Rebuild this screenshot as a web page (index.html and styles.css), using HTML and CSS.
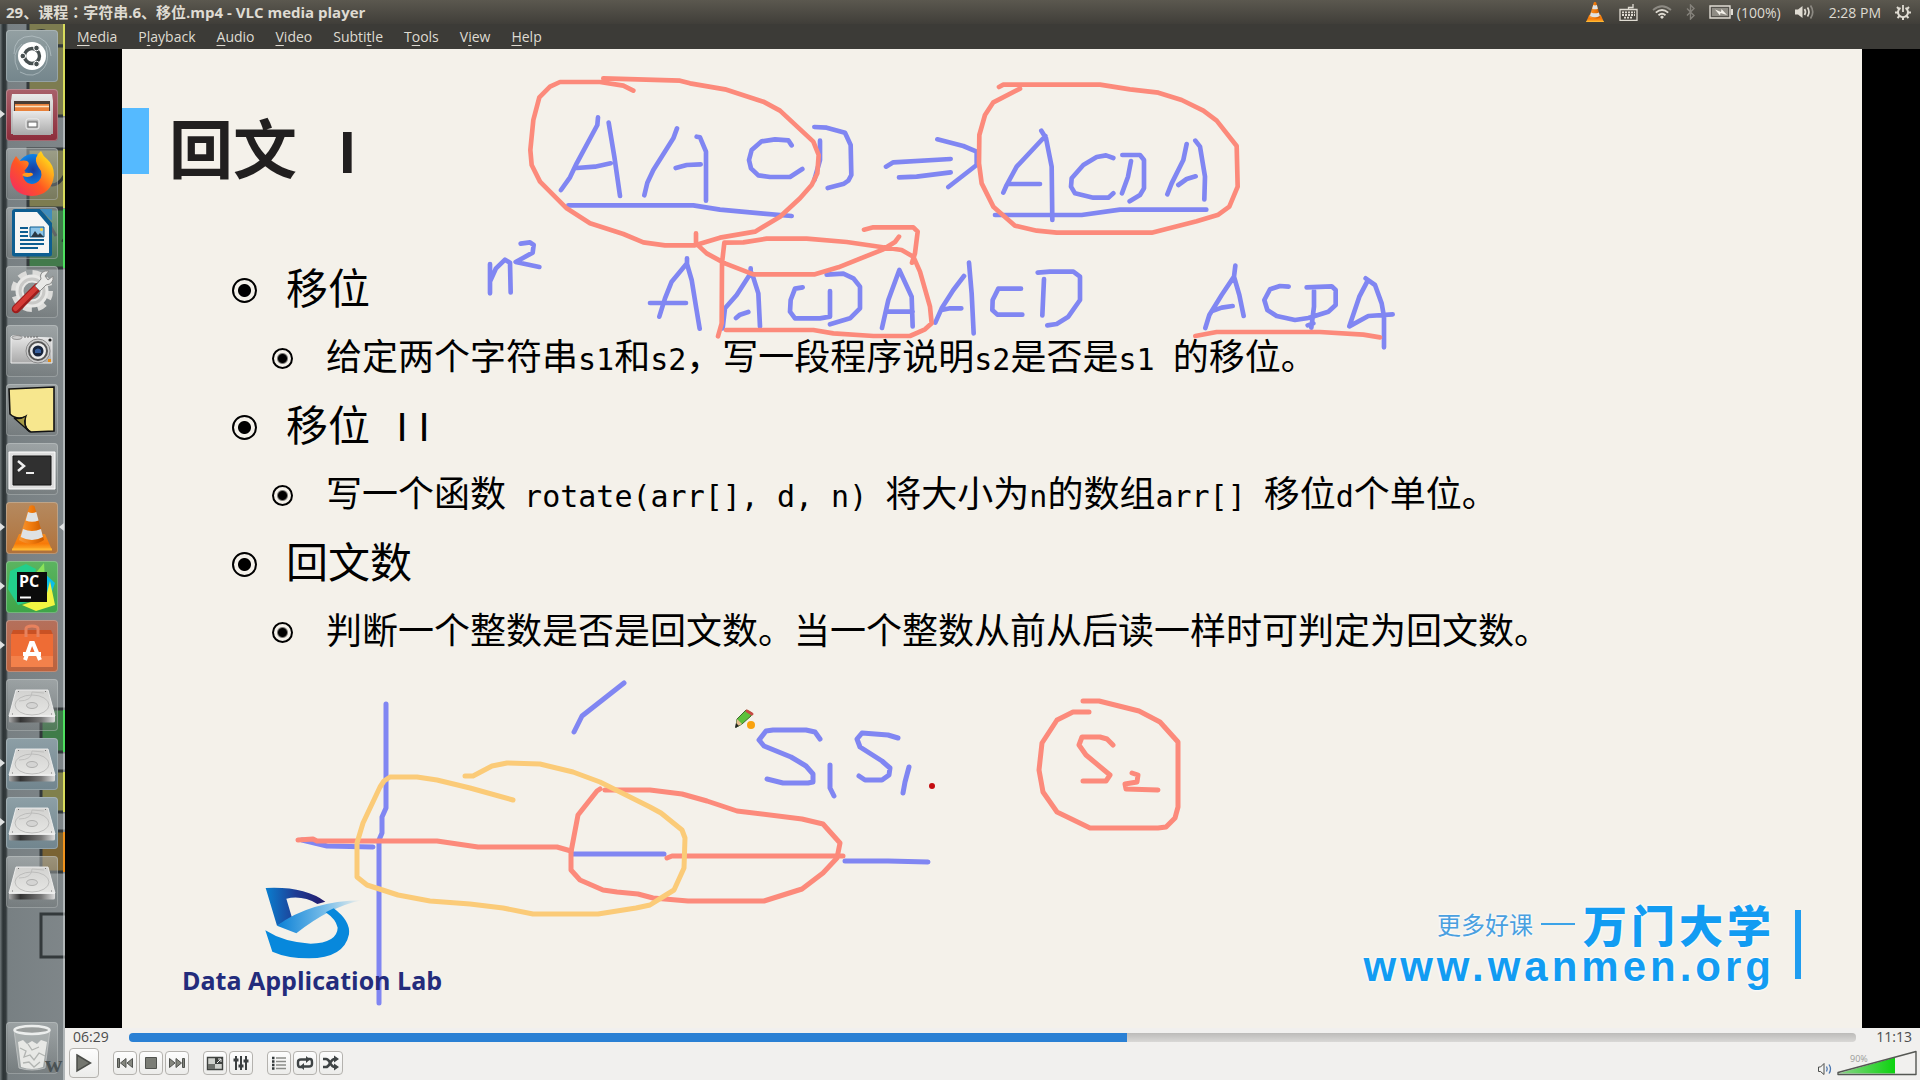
FILE: index.html
```html
<!DOCTYPE html>
<html lang="zh-CN">
<head>
<meta charset="utf-8">
<title>29、课程：字符串.6、移位.mp4 - VLC media player</title>
<link rel="stylesheet" href="styles.css">
</head>
<body>
<svg class="defs" width="0" height="0" aria-hidden="true">
  <defs>
    <linearGradient id="coneGrad" x1="0" x2="1"><stop offset="0" stop-color="#f79a3a"/><stop offset=".5" stop-color="#f07a0c"/><stop offset="1" stop-color="#c95a00"/></linearGradient>
    <linearGradient id="baseGrad" x1="0" x2="0" y1="0" y2="1"><stop offset="0" stop-color="#f28a1e"/><stop offset=".6" stop-color="#f87a08"/><stop offset="1" stop-color="#fdb12b"/></linearGradient>
    <linearGradient id="metal" x1="0" x2="0" y1="0" y2="1"><stop offset="0" stop-color="#e9e9e9"/><stop offset="1" stop-color="#a9a9a9"/></linearGradient>
    <linearGradient id="diskTop" x1="0" x2="0" y1="0" y2="1"><stop offset="0" stop-color="#d2d2d0"/><stop offset="1" stop-color="#e6e6e4"/></linearGradient>
    <linearGradient id="diskFront" x1="0" x2="1"><stop offset="0" stop-color="#aaa"/><stop offset=".25" stop-color="#333"/><stop offset=".7" stop-color="#777"/><stop offset="1" stop-color="#ddd"/></linearGradient>
    <symbol id="cone" viewBox="0 0 52 52">
      <path d="M13 32H39L46 48H6Z" fill="url(#baseGrad)"/>
      <path d="M6 46.500H46V48.500H6Z" fill="#ffb733"/>
      <path d="M23.500 4Q26 2.600 28.500 4L38 38Q26 46 13 38Z" fill="url(#coneGrad)"/>
      <path d="M22 10Q26 12 30.300 10L32.600 18.500Q26 21 19.600 18.500Z" fill="#dfe2e4"/>
      <path d="M17 27Q26 31 35 27L37 35Q26 41 14.700 35Z" fill="#dfe2e4"/>
    </symbol>
    <symbol id="disk" viewBox="0 0 52 52">
      <path d="M10 11H42L49 37H3Z" fill="url(#diskTop)" stroke="#f6f6f6" stroke-width=".8"/>
      <path d="M3 37H49V42Q49 43.500 47 43.500H5Q3 43.500 3 42Z" fill="url(#diskFront)"/>
      <path d="M3 37.400H49" stroke="#f3f3f3"/>
      <ellipse cx="26" cy="26" rx="17" ry="10" fill="none" stroke="#b9b9b8" stroke-width=".9"/>
      <ellipse cx="26" cy="26.500" rx="5.500" ry="3" fill="#d4d4d3" stroke="#a9a9a8" stroke-width=".9"/>
      <path d="M13 22Q26 22 26 13L38 14" fill="none" stroke="#bcbcbb" stroke-width=".9"/>
      <path d="M12 12.500L13 12.500M39 12.500H40M6 35H7M45 35H46" stroke="#777"/>
    </symbol>
  </defs>
</svg>

<header class="panel">
  <h1 class="panel-title">29、课程<span lang="zh-TW" class="colon">：</span>字符串.6、移位.mp4 - VLC media player</h1>
  <div class="tray">
    <svg width="20" height="22" viewBox="4 1 44 50"><use href="#cone" width="52" height="52"/></svg>
    <svg width="19" height="18" viewBox="0 0 19 18" fill="none" stroke="#dfdbd2" stroke-width="1.300"><path d="M1 6.500H18V17.300H1ZM9.500 6V4.500H14V1"/><path d="M3 9.300H16M3 12H16M5 14.700H14" stroke-width="1.800" stroke-dasharray="2 1"/></svg>
    <svg width="20" height="14" viewBox="0 0 20 14" fill="none" stroke="#dfdbd2" stroke-width="1.800"><path d="M1 5Q10-2.500 19 5" stroke="#8d8a83"/><path d="M3.800 7.600Q10 2.400 16.200 7.600M6.500 10.200Q10 7.300 13.500 10.200"/><path d="M8 12L10 10.600L12 12L10 14Z" fill="#dfdbd2" stroke="none"/></svg>
    <svg width="9" height="16" viewBox="0 0 9 16" fill="none" stroke="#85827b" stroke-width="1.400"><path d="M1 4.500L8 11.500L4.500 15V1L8 4.500L1 11.500"/></svg>
    <span class="battery">
      <svg width="24" height="14" viewBox="0 0 24 14"><path d="M1 1H21V13H1Z" fill="#55534d" stroke="#dfdbd2" stroke-width="1.400"/><path d="M22 4H24V10H22Z" fill="#dfdbd2"/><path d="M3 3H19V11H3Z" fill="#8f8c84"/><path d="M6 4.500L12 7L12.500 4L18 10L11.500 8L11 10.500Z" fill="#f4f1ea"/></svg>
      <span>(100%)</span>
    </span>
    <svg width="20" height="16" viewBox="0 0 20 16" fill="none" stroke="#dfdbd2" stroke-width="1.700"><path d="M0 5.500H3L7.500 2V14L3 10.500H0Z" fill="#dfdbd2" stroke="none"/><path d="M9.500 5Q11.500 8 9.500 11M12.500 3.500Q15.500 8 12.500 12.500"/><path d="M15.500 1.500Q20 8 15.500 14.500" stroke="#8d8a83"/></svg>
    <time>2:28 PM</time>
    <svg width="16" height="16" viewBox="0 0 16 16" fill="none" stroke="#dfdbd2"><path d="M5.500 3.900A5 5 0 1 0 10.500 3.900" stroke-width="2"/><path d="M8 1V8" stroke-width="1.800"/><path d="M2 3L4 5M14 3L12 5M0 8.500H3M16 8.500H13M2.500 14L4.500 12M13.500 14L11.500 12M8 16V13" stroke-width="2"/></svg>
  </div>
</header>

<div class="desktop">
  <nav class="launcher" aria-label="Launcher">
    <svg class="wallpaper" width="65" height="1056" viewBox="0 24 65 1056" aria-hidden="true">
      <g stroke="#33393b" stroke-width="3">
        <path d="M28 0H70V46H28Z" fill="#7d7c50"/><path d="M28 46H70V116H28Z" fill="#7d7c50"/>
        <path d="M28 149H70V208H28Z" fill="#7d7c50"/><path d="M28 209H70V268H28Z" fill="#427a4b"/>
        <path d="M41 709H70V752H41Z" fill="#3f7c49"/><path d="M41 771H70V812H41Z" fill="#80804c"/>
        <path d="M41 831H70V872H41Z" fill="#7a6333"/><path d="M41 914H70V957H41Z" fill="none"/>
        <path d="M34 32Q52 26 48 44L36 46M44 182Q56 190 64 176M40 208L56 236M62 240L66 242" fill="none"/>
      </g>
      <path d="M64 24V1080" stroke="#e3e6e6" stroke-width="1"/>
      <path d="M64 24V116M64 149V208M64 772V812" stroke="#d8dc5c" stroke-width="2"/>
      <path d="M64 209V268M64 710V752" stroke="#4ee05f" stroke-width="2"/><path d="M64 832V872" stroke="#f0921c" stroke-width="2"/>
    </svg>
    <button class="tile tile-dash" aria-label="Search">
      <svg viewBox="0 0 52 52"><g fill="none" stroke="#c2cdd0" stroke-opacity=".6"><path d="M8 24Q8 6 26 6Q44 8 45 26"/><path d="M12 40Q4 24 16 14M14 42Q28 50 38 38Q44 30 40 16"/></g><circle cx="26" cy="26" r="14" fill="#fff"/><circle cx="26" cy="26" r="7.500" fill="none" stroke="#474f50" stroke-width="3.400"/><g fill="#474f50" stroke="#fff"><circle cx="16.800" cy="26" r="2.800"/><circle cx="30.500" cy="18" r="2.800"/><circle cx="30.500" cy="34" r="2.800"/></g></svg>
    </button>
    <button class="tile tile-files running" aria-label="Files">
      <svg viewBox="0 0 52 52"><path d="M6 5H46L47 12V45H5V12Z" fill="url(#metal)"/><path d="M8 12H44V24H8Z" fill="#4a3d34"/><path d="M9 15H43V22H9Z" fill="#e8813a"/><path d="M9 17.500H43" stroke="#fbe2c0" stroke-width="1.500"/><path d="M7 22H45V46H7Z" fill="url(#metal)"/><rect x="20" y="30" width="13" height="10" rx="2" fill="#bbb" stroke="#eee"/><rect x="22" y="33" width="9" height="5" fill="#fff" stroke="#666"/></svg>
    </button>
    <button class="tile" aria-label="Firefox">
      <svg viewBox="0 0 52 52"><defs><linearGradient id="fox" x1="0" y1="1" x2="1" y2="0"><stop offset="0" stop-color="#f2246c"/><stop offset=".45" stop-color="#ff5722"/><stop offset=".8" stop-color="#ffc61a"/><stop offset="1" stop-color="#fff04d"/></linearGradient><radialGradient id="globe"><stop offset="0" stop-color="#1b3a9c"/><stop offset="1" stop-color="#0d84e8"/></radialGradient></defs><circle cx="27" cy="22" r="16" fill="url(#globe)"/><path d="M7 13L10 8L14 13Q18 12 21 13Q25 15 20 21Q17 23 20 24Q16 27 18 31Q22 38 30 35Q37 31 35 23Q29 15 30 10Q32 5 35 3Q37 8 41 11Q48 17 48 27Q46 47 26 48Q6 47 4 29Q4 18 7 13Z" fill="url(#fox)"/><path d="M16 27Q21 31 27 27Q27 24 23 25Q18 24 16 27Z" fill="#ff9a1f"/></svg>
    </button>
    <button class="tile" aria-label="LibreOffice Writer">
      <svg viewBox="0 0 52 52"><path d="M9 2H34L46 16V47Q46 49.500 43 49.500H9Q6 49.500 6 47V5Q6 2 9 2Z" fill="#0d5e91"/><path d="M34 2H46V14Z" fill="#3f8cbc"/><path d="M9 5H31L43 19V46H9Z" fill="#f6f6f4"/><path d="M14 21H22M14 25H22M14 29H22M14 33H38M14 37H38M14 41H32" stroke="#0d5e91" stroke-width="2"/><path d="M24 20H38V30H24Z" fill="#8dc5e8" stroke="#0d5e91"/><path d="M25 30L29 24L32 28L34 26L38 30Z" fill="#2b3a45"/><circle cx="35.500" cy="22.500" r="1.500" fill="#ffd23e"/></svg>
    </button>
    <button class="tile" aria-label="System Settings">
      <svg viewBox="0 0 52 52"><circle cx="26" cy="25" r="17.500" fill="none" stroke="#dcdcda" stroke-width="7" stroke-dasharray="8 5.740"/><circle cx="26" cy="25" r="12.500" fill="none" stroke="#e8e8e6" stroke-width="8"/><circle cx="26" cy="25" r="12" fill="none" stroke="#c9c9c7" stroke-width="3"/><path d="M32 21L10 43" stroke="#9c1d1c" stroke-width="8.500" stroke-linecap="round"/><path d="M32 20L9.500 42.500" stroke="#d43a35" stroke-width="5" stroke-linecap="round"/><path d="M29 20L35 13Q33 7 39 5H43L39 10L42 14L47 10Q48 18 40 19L34 25Z" fill="#e9e9e7" stroke="#8b8b8a"/></svg>
    </button>
    <button class="tile" aria-label="Camera">
      <svg viewBox="0 0 52 52"><path d="M5 12Q8 9 15 12L46 13V38H5Z" fill="url(#metal)" stroke="#eee"/><ellipse cx="11" cy="12.500" rx="5" ry="2" fill="#ccc" stroke="#777" stroke-width=".7"/><path d="M18 12H32" stroke="#666" stroke-dasharray="2 1"/><circle cx="32" cy="26" r="12" fill="#ccc" stroke="#8a8a8a"/><circle cx="32" cy="26" r="9" fill="#ededed" stroke="#555" stroke-width="2"/><circle cx="32" cy="26" r="5.500" fill="#17243c"/><path d="M29 25Q32 22 35 25V28H29Z" fill="#375f9e"/><circle cx="44" cy="15" r="1.600" fill="#222"/><path d="M42 34H45V37H42Z" fill="#e58d17"/></svg>
    </button>
    <button class="tile" aria-label="Notes">
      <svg viewBox="0 0 52 52"><path d="M3 5L48 3V47L25 48Q20 46 19 40L19 33Q10 36 4 30Z" fill="#f7e78e" stroke="#111" stroke-width="1.600"/><path d="M8 34Q14 36 20 32Q16 42 24 48Z" fill="#a69a45" stroke="#111" stroke-width="1.300"/></svg>
    </button>
    <button class="tile" aria-label="Terminal">
      <svg viewBox="0 0 52 52"><path d="M3 9H49V46H3Z" fill="#dedede" stroke="#fff"/><path d="M7 13H45V42H7Z" fill="#303030" stroke="#151515"/><path d="M12 18L18 23L12 28" fill="none" stroke="#eee" stroke-width="2.500"/><path d="M20 30H28" stroke="#eee" stroke-width="2"/></svg>
    </button>
    <button class="tile tile-vlc running focused" aria-label="VLC media player"><svg viewBox="0 0 52 52"><use href="#cone" width="52" height="52"/></svg></button>
    <button class="tile tile-pycharm running" aria-label="PyCharm">
      <svg viewBox="0 0 52 52"><path d="M4 10L20 3L30 8L24 40L12 44L2 28Z" fill="#22cf8b"/><path d="M28 14L38 2L39 18Z" fill="#8be35a"/><path d="M38 12L49 22L44 36H36Z" fill="#0dbfe8"/><path d="M16 44L40 36L44 20L49 44L30 50Z" fill="#f2f542"/><path d="M11 11H41V41H11Z" fill="#0b0b0b"/><path d="M14 36.500H25" stroke="#fff" stroke-width="2"/><text x="13" y="26" class="pc-text">PC</text></svg>
    </button>
    <button class="tile tile-store running" aria-label="Software">
      <svg viewBox="0 0 52 52"><path d="M7 10H45L47 15H5Z" fill="#c95124"/><path d="M5 14H47V47H5Z" fill="#ee6c35"/><path d="M5 36H47V47H5Z" fill="#f3814b"/><path d="M20 17V9Q20 6 26 6Q32 6 32 9V17" fill="none" stroke="#e7825e" stroke-width="3"/><path d="M19 40L25 23H27L34 40M17 34H35" fill="none" stroke="#fff" stroke-width="4"/></svg>
    </button>
    <button class="tile" aria-label="Volume 1"><svg viewBox="0 0 52 52"><use href="#disk" width="52" height="52"/></svg></button>
    <button class="tile tile-disk running" aria-label="Volume 2"><svg viewBox="0 0 52 52"><use href="#disk" width="52" height="52"/></svg></button>
    <button class="tile tile-disk running" aria-label="Volume 3"><svg viewBox="0 0 52 52"><use href="#disk" width="52" height="52"/></svg></button>
    <button class="tile" aria-label="Volume 4"><svg viewBox="0 0 52 52"><use href="#disk" width="52" height="52"/></svg></button>
    <button class="tile tile-trash" aria-label="Trash">
      <svg viewBox="0 0 52 52"><path d="M8 8L13 46Q26 50 39 46L44 8Z" fill="#c6c9c8" fill-opacity=".45" stroke="#c4c7c6" stroke-width=".8"/><ellipse cx="26" cy="8" rx="17.500" ry="4" fill="#9a9e9d" stroke="#eceeed" stroke-width="2.500"/><path d="M12 20L17 18L21 22L26 19L31 22L35 18L41 20L37 45Q26 49 15 45Z" fill="#e7e8e5"/><path d="M14 26L20 29L18 35L24 33L28 38L33 31L39 34M22 22L26 28L33 25M17 41L23 40L28 45L34 40" fill="none" stroke="#b1b4b1" stroke-width="1.300"/></svg>
      <span class="wall-letter">w</span>
    </button>
  </nav>

  <main class="player">
    <div class="menubar">
      <button><u>M</u>edia</button><button>P<u>l</u>ayback</button><button><u>A</u>udio</button><button><u>V</u>ideo</button><button>Subti<u>t</u>le</button><button>T<u>o</u>ols</button><button>V<u>i</u>ew</button><button><u>H</u>elp</button>
    </div>

    <div class="video">
      <article class="slide">
        <h2 class="slide-title">回文<span class="stem">I</span></h2>
        <ul class="topics">
          <li>移位
            <ul><li>给定两个字符串<code>s1</code>和<code>s2</code>，写一段程序说明<code>s2</code>是否是<code>s1 </code>的移位。</li></ul>
          </li>
          <li>移位<span class="numeral"><span>I</span><span>I</span></span>
            <ul><li>写一个函数<code> rotate(arr[], d, n) </code>将大小为<code>n</code>的数组<code>arr[] </code>移位<code>d</code>个单位。</li></ul>
          </li>
          <li>回文数
            <ul><li>判断一个整数是否是回文数。当一个整数从前从后读一样时可判定为回文数。</li></ul>
          </li>
        </ul>
        <footer class="slide-footer">
          <div class="lab">
            <svg width="98" height="72" viewBox="340 648 294 216">
              <defs><linearGradient id="dTop" x1="0" x2="1"><stop offset="0" stop-color="#0a7fd0"/><stop offset=".5" stop-color="#1f3d94"/><stop offset="1" stop-color="#241a6c"/></linearGradient><linearGradient id="dTick" x1="0" x2="1"><stop offset="0" stop-color="#0a80d6"/><stop offset=".6" stop-color="#7fc1ea"/><stop offset="1" stop-color="#f4f1ea"/></linearGradient></defs>
              <path d="M345 651Q460 645 524 692L500 699Q455 672 407 683L424 740L379 764Z" fill="url(#dTop)"/>
              <path d="M379 764Q480 690 634 688Q540 706 437 787Z" fill="url(#dTick)"/>
              <path d="M344 778Q400 814 480 818Q560 815 561 770Q556 745 525 724L549 712Q600 750 595 790Q580 862 475 862Q410 862 365 842Z" fill="#0788dc"/>
            </svg>
            <p>Data Application Lab</p>
          </div>
          <div class="school">
            <div class="school-text">
              <p class="school-name"><span>更多好课</span><i class="dash"></i><strong>万门大学</strong></p>
              <a href="#">www.wanmen.org</a>
            </div>
          </div>
        </footer>

        <svg class="ink" viewBox="122 49 1740 979" aria-hidden="true">
          <g class="blue">
            <g transform="translate(480 60) scale(.33333)">
              <path d="M354 172L352 195L290 310L270 352L243 390M386 188L403 290L420 408M290 324L345 320L392 310M591 205L580 235L520 330L502 368L493 406M650 230L660 232L678 275V422M587 324L620 315L662 313M935 256L925 241L885 238L845 244L815 270L807 300L813 325L835 346L870 351H930L967 327"/>
              <path d="M1020 242V300L1003 360M1003 201L1040 203L1095 218L1112 255L1114 345L1105 362L1092 371L1043 384"/>
              <path d="M265 436H640L720 449L850 461L935 468M1218 320L1240 307L1412 297M1257 352L1310 350L1412 337M1372 238L1450 258L1490 275V315L1405 381"/>
              <path d="M30 612V640V700V665L48 625L75 599L90 608L92 697M122 551L150 547L161 555L158 578L107 606L125 610L178 621"/>
              <path d="M621 595V610L575 665L555 715L538 770M621 612L635 660L648 740L659 806M510 729H618M812 625V640L770 705L735 745L728 805M816 640L835 700L840 800M768 774L780 764L805 756M968 682L945 686L932 720L930 755L945 775H1020L1050 770V693M1040 644L1090 641L1120 655L1140 680V745L1110 775L1050 793M1206 804L1225 720L1258 630L1295 710L1298 799M1222 755H1298M1366 788L1385 745L1420 690L1452 648M1467 608L1475 700L1481 820M1385 750L1410 745H1444"/>
            </g>
            <g transform="translate(940 60) scale(.33333)">
              <path d="M304 212L318 235L335 320L337 480M316 228L230 320L200 375L190 398M205 372H300M520 294L498 286L470 291L430 315L395 355L393 380L405 400L460 413H505L520 400M547 285H600L612 300V385L600 405L569 424M573 303L564 350L546 400M740 252L730 300L695 370L682 403M766 242L780 260L795 350L793 418M715 375L740 357L767 349"/>
              <path d="M165 465H425L540 449H799M243 686H175L158 720L157 750L172 764H247M293 638L330 635H400L420 650V720L385 770L350 792L322 796M312 657L307 766"/>
              <path d="M886 617L882 650L845 705L808 765L796 804M882 650L898 705L911 768M820 752L845 743L878 738M1046 680L1020 678L990 688L973 720L982 750L1010 768L1065 780L1105 774L1165 755L1187 735V690L1175 679L1100 682M1122 692V740L1114 803M1103 796L1120 790M1277 655L1305 675L1325 730L1332 770V862M1282 664L1258 710L1228 799L1285 768L1358 763"/>
            </g>
            <path d="M820 739L815 732L806 730H773L766 731L759 740L764 746L791 757L806 766L813 774V782L808 783H783L767 779M830 765V788L834 796M898 738L888 735L862 733L857 739L860 747L882 761L890 768L889 775L882 780H865L859 776M909 767L905 782L903 793"/>
            <path d="M302 840L327 846L373 847M386 704V808L382 817V833L379 840V1003M574 732L582 716L624 683M573 854H664M845 861H888L928 862"/>
          </g>
          <g class="red">
            <g transform="translate(480 60) scale(.33333)">
              <path d="M460 92L430 77L360 66H240L210 80L178 112L160 180L151 270L155 315L180 365L260 445L330 490L430 522L490 547L555 556H645L720 533L825 515L900 470L960 415L995 375L1012 340L1016 285L1000 245L900 152L850 125L735 88L630 70L600 62L370 55"/>
              <path d="M648 520V550L680 580L735 610L820 643H1005L1075 622L1210 568L1245 546L1257 530M1152 509L1180 502H1300L1313 515L1305 580L1296 608M714 829L725 790L726 610L733 548L790 547L860 536H980L1100 546L1265 570L1300 590L1320 635L1350 740L1355 790L1335 808L1290 828H1180L1060 820L1000 810H738"/>
            </g>
            <g transform="translate(940 60) scale(.33333)">
              <path d="M177 81L190 74H480L570 88L655 98L725 120L790 152L830 182L890 258L893 380L868 440L835 464L770 484L635 518H350L290 512L225 497L160 440L125 370L117 310L118 225L135 165L160 127L240 86M766 828L830 816H1140L1270 824L1320 832"/>
            </g>
            <path d="M600 789L597 791L578 815L571 852V870L580 880L603 890L617 892L638 894L653 898L688 901H764L802 889L823 873L837 858L840 843L823 824L802 819L737 811L707 801L682 794L650 790H605"/>
            <path d="M298 840L313 839L317 841H437L478 847H557L571 851M667 858L672 856H843"/>
            <path d="M1083 701H1099L1139 711L1160 722L1178 742V807L1175 818L1166 827L1158 828H1090L1057 812L1043 792L1039 770L1042 743L1057 720L1073 712H1089M1113 745L1107 739L1100 737H1082L1079 745L1086 755L1110 775L1106 781H1083M1132 773L1138 775L1137 782L1125 784L1126 789L1158 790"/>
          </g>
          <path class="amber" d="M465 776H473L492 766L507 763L540 764L573 772L600 782L650 807L661 813L682 830L685 838L684 868L674 890L661 898L650 905L636 908L598 914H533L503 908L470 904L430 901L398 895L367 885L357 877V843L363 823L380 787L384 781L390 777H417L437 780L470 788L513 800"/>
          <circle cx="932" cy="786" r="3" fill="#c40c10"/>
          <path d="M736 727L737 719L746 710L752 713L751 716L742 724Z" fill="#5dc13c" stroke="#3c6a2c"/><path d="M736 727L737 719L742 724Z" fill="#e4bd8d"/><path d="M735 728L736 723L739 726Z" fill="#222"/><path d="M747 711L752 714" stroke="#c84a44" stroke-width="3"/><circle cx="751" cy="725" r="4" fill="#f9a20d"/>
        </svg>
      </article>
    </div>

    <div class="controls">
      <div class="seek-row">
        <span>06:29</span>
        <input class="seek" type="range" min="0" max="673" value="389" aria-label="Position">
        <span>11:13</span>
      </div>
      <div class="button-row">
        <button class="btn play" aria-label="Play"><svg width="16" height="20" viewBox="0 0 16 20"><path d="M1 2L14.500 10L1 18Z" fill="#74766f" stroke="#4b4d49" stroke-width="1.500"/></svg></button>
        <div class="group">
          <button class="btn" aria-label="Previous"><svg width="18" height="12" viewBox="0 0 18 12" fill="#85877f" stroke="#50524e"><path d="M1.500 1.500H3.500V10.500H1.500ZM10 1.500V10.500L4.500 6ZM16.500 1.500V10.500L11 6Z"/></svg></button>
          <button class="btn" aria-label="Stop"><svg width="14" height="14" viewBox="0 0 14 14"><path d="M1.500 1.500H12.500V12.500H1.500Z" fill="#7b7d76" stroke="#50524e"/></svg></button>
          <button class="btn" aria-label="Next"><svg width="18" height="12" viewBox="0 0 18 12" fill="#85877f" stroke="#50524e"><path d="M16.500 1.500H14.500V10.500H16.500ZM8 1.500V10.500L13.500 6ZM1.500 1.500V10.500L7 6Z"/></svg></button>
        </div>
        <div class="group">
          <button class="btn" aria-label="Fullscreen"><svg width="18" height="16" viewBox="0 0 18 16"><path d="M1.500 2.500H16.500V14.500H1.500Z" fill="#cfd1cc" stroke="#3f423f" stroke-width="1.400"/><path d="M9 3H16V9H9Z" fill="#3f423f"/><path d="M2 9H9V14H2Z" fill="#6d706b"/><path d="M11 8L15 4M12 4H15V7" stroke="#eee" fill="none"/></svg></button>
          <button class="btn" aria-label="Extended settings"><svg width="16" height="16" viewBox="0 0 16 16" stroke="#3b3f40" stroke-width="2"><path d="M3 1V15M8 1V15M13 1V15"/><path d="M.5 5H5.500M5.500 11H10.500M10.500 6H15.500" stroke-width="3"/></svg></button>
        </div>
        <div class="group">
          <button class="btn" aria-label="Playlist"><svg width="16" height="14" viewBox="0 0 16 14"><path d="M5 2H15M5 5.500H15M5 9H15M5 12.500H15" stroke="#8a8c88" stroke-width="1.500"/><path d="M1 2H3.500M1 5.500H3.500M1 9H3.500M1 12.500H3.500" stroke="#33383a" stroke-width="2.400"/></svg></button>
          <button class="btn" aria-label="Loop"><svg width="18" height="16" viewBox="0 0 18 16" fill="none" stroke="#3f4445" stroke-width="2.400"><path d="M6 12H4Q2 12 2 9V7Q2 4.500 5 4.500H11M12 4H14Q16 4 16 7V9Q16 11.500 13 11.500H7"/><path d="M10 1L14 4.500L10 8ZM8 8L4 11.500L8 15Z" fill="#3f4445" stroke="none"/></svg></button>
          <button class="btn" aria-label="Shuffle"><svg width="18" height="16" viewBox="0 0 18 16" fill="none" stroke="#3f4445" stroke-width="2.600"><path d="M1 4H4Q6 4 8 7.500Q10 12 13 12M1 12H4Q6 12 8 8.500Q10 4 13 4"/><path d="M12 .5L17 4L12 7.500ZM12 8.500L17 12L12 15.500Z" fill="#3f4445" stroke="none"/></svg></button>
        </div>
        <div class="volume">
          <svg width="16" height="14" viewBox="0 0 16 14" fill="none"><path d="M1.500 5H3.500L7 1.500V12.500L3.500 9.500H1.500Z" fill="#f4f4f2" stroke="#4c4e4c"/><path d="M9.500 4.500Q11 7 9.500 9.500M12 2.500Q15 7 12 11.500" stroke="#4a76b0" stroke-width="1.300"/></svg>
          <div class="wedge">
            <svg width="82" height="26" viewBox="0 0 82 26"><defs><linearGradient id="vol" x1="0" x2="1"><stop offset="0" stop-color="#8fd48b"/><stop offset="1" stop-color="#0cd30f"/></linearGradient></defs><path d="M2 23.500L59 7.500V23.500Z" fill="url(#vol)"/><path d="M2 24.500V22.500L80 1.500V24.500Z" fill="none" stroke="#555753" stroke-width="1.400" stroke-linejoin="round"/><text x="14" y="12" class="vol-text">90%</text></svg>
            <input type="range" min="0" max="125" value="90" aria-label="Volume">
          </div>
        </div>
      </div>
    </div>
  </main>
</div>
</body>
</html>
```
FILE: styles.css
```css
*, *::before, *::after { box-sizing: border-box; }
body {
  margin: 0;
  height: 100vh;
  display: flex;
  flex-direction: column;
  overflow: hidden;
  font-family: "Open Sans", "Noto Sans CJK SC", sans-serif;
  background: #000;
}
.defs { position: absolute; }
h1, h2, p, ul { margin: 0; padding: 0; }
ul { list-style: none; }
button { font: inherit; border: 0; padding: 0; background: none; color: inherit; }
svg { display: block; flex: none; }

/* top panel */
.panel {
  flex: none;
  height: 24px;
  padding: 0 9px 0 6px;
  display: flex;
  align-items: center;
  justify-content: space-between;
  background: linear-gradient(#5b584f, #403e39);
  color: #dfdbd2;
  font-size: 14px;
}
.panel-title { font: 700 15px/24px "Open Sans", "Noto Sans CJK SC", sans-serif; white-space: nowrap; }
.colon { font-family: "Noto Sans CJK TC", sans-serif; }
.tray { display: flex; align-items: center; gap: 14px; white-space: nowrap; }
.battery { display: flex; align-items: center; gap: 4px; }

.desktop { flex: 1; min-height: 0; display: flex; }

/* launcher */
.launcher {
  position: relative;
  flex: none;
  width: 65px;
  padding: 6px;
  display: flex;
  flex-direction: column;
  gap: 7px;
  background: linear-gradient(90deg, #6f7779 0, #2c3335 3px, #343b3d 6px, #788083 8px, #7f8689 100%);
}
.wallpaper { position: absolute; left: 0; top: 0; }
.tile {
  position: relative;
  flex: none;
  width: 52px;
  height: 52px;
  border-radius: 4px;
  background: linear-gradient(rgba(190, 195, 195, .5), rgba(110, 115, 115, .35));
  box-shadow: inset 0 0 0 1px rgba(210, 215, 215, .35);
}
.tile svg { width: 52px; height: 52px; }
.tile-dash { background: linear-gradient(#93a0a2, #74868c); }
.tile-files { background: linear-gradient(#a8606a, #8c2c3a); }
.tile-vlc { background: linear-gradient(#b58a60, #b0713a); }
.tile-pycharm { background: linear-gradient(#5cb460, #3ea548); }
.tile-store { background: linear-gradient(#b4705c, #bd623c); }
.tile-disk { background: linear-gradient(#8d9fa6, #71858e); }
.tile-trash { margin-top: auto; }
.running::before, .focused::after {
  content: "";
  position: absolute;
  top: 21px;
  left: -6px;
  border: 4px solid transparent;
  border-left: 5px solid #dfe1e1;
  border-right: 0;
}
.focused::after { left: 53px; border-left: 0; border-right: 5px solid #dfe1e1; }
.pc-text { font: 700 16px "Open Sans", sans-serif; fill: #fff; }
.wall-letter { position: absolute; left: 39px; bottom: -4px; color: #4a5254; font: 700 24px/28px "Liberation Serif", serif; }

/* player */
.player { flex: 1; min-width: 0; display: flex; flex-direction: column; }
.menubar {
  flex: none;
  height: 25px;
  padding: 0 12px;
  display: flex;
  align-items: center;
  gap: 21px;
  background: #3c3b37;
  color: #dfdbd2;
  font-size: 14px;
}
.menubar u { text-underline-offset: 3px; text-decoration-thickness: 1px; }
.video {
  flex: 1;
  min-height: 0;
  padding-right: 1px;
  display: flex;
  justify-content: center;
  background: #000;
}
.slide {
  position: relative;
  height: 100%;
  aspect-ratio: 1740 / 979;
  padding: 59px 61px 32px 0;
  display: flex;
  flex-direction: column;
  background: #f4f1ea;
  color: #000;
  font-family: "Noto Sans CJK SC", sans-serif;
}
.slide-title {
  height: 66px;
  padding-left: 20px;
  border-left: 27px solid #55baff;
  color: #211f1f;
  font-size: 64px;
  line-height: 74px;
  font-weight: 700;
}
.stem { padding-left: 42px; font-family: "Liberation Sans", sans-serif; font-size: 60px; }
.topics { padding: 77px 0 0 110px; }
.topics li { position: relative; padding-left: 54px; font-size: 42px; line-height: 69px; white-space: nowrap; }
.topics ul li { margin-left: -14px; font-size: 36px; line-height: 68px; }
.topics li::before {
  content: "";
  position: absolute;
  left: 0;
  top: 27px;
  width: 25px;
  height: 25px;
  border: 2px solid #000;
  border-radius: 50%;
  background: radial-gradient(circle, #000 6px, transparent 7px);
}
.topics ul li::before { top: 28px; width: 21px; height: 21px; background: radial-gradient(circle, #000 4px, transparent 6px); }
.topics code { font-family: "DejaVu Sans Mono", monospace; font-size: 30px; line-height: 1; white-space: pre; }
.numeral { display: inline-flex; padding-left: 21px; font-family: "Liberation Sans", sans-serif; font-size: 40px; line-height: 1; }
.numeral span { width: 22px; text-align: center; }

.slide-footer {
  position: relative;
  z-index: 1;
  margin-top: auto;
  padding-left: 60px;
  display: flex;
  justify-content: space-between;
  align-items: flex-end;
}
.lab svg { margin-left: 82px; }
.lab p { color: #232c7c; font: 700 25px/32px "Open Sans", sans-serif; padding-top: 5px; }
.school { height: 69px; margin-bottom: 17px; padding-right: 20px; border-right: 6px solid #1f9df0; }
.school-text { display: flex; flex-direction: column; align-items: flex-end; }
.school a, .school-name { color: #129cf2; text-shadow: 0 0 3px #fff, 0 0 3px #fff; }
.school a { font: 700 42px/40px "Liberation Sans", sans-serif; letter-spacing: 4px; text-decoration: none; }
.school-name { margin: -4px 0 5px; display: flex; align-items: center; gap: 8px; font-size: 24px; line-height: 36px; }
.school-name span { color: #4aa0e0; }
.school-name strong { font-size: 44px; font-weight: 900; letter-spacing: 4px; }
.dash { width: 34px; height: 2px; background: #3ba3e8; }

.ink { position: absolute; inset: 0; width: 100%; height: 100%; fill: none; stroke-linecap: round; stroke-linejoin: round; }
.blue { stroke: #8086f2; stroke-width: 5px; }
.red { stroke: #fc8a7b; stroke-width: 5px; }
.amber { stroke: #fbcb78; stroke-width: 5px; }
.ink g g { stroke-width: 14px; }

/* transport controls */
.controls { flex: none; height: 52px; background: #f1f0ee; color: #4c4c4c; font-size: 14px; }
.seek-row { height: 18px; padding: 0 8px; display: flex; align-items: center; gap: 20px; line-height: 18px; }
.seek {
  appearance: none;
  flex: 1;
  min-width: 0;
  height: 9px;
  margin: 0;
  border-radius: 4px;
  background: linear-gradient(90deg, #2a80d4 57.8%, transparent 57.8%), linear-gradient(#bcbbb9, #d9d8d6);
}
.seek::-webkit-slider-thumb { appearance: none; width: 1px; height: 9px; }
.button-row { height: 34px; padding: 0 2px 0 4px; display: flex; align-items: center; gap: 14px; }
.group { display: flex; gap: 2px; }
.btn {
  width: 24px;
  height: 24px;
  display: flex;
  align-items: center;
  justify-content: center;
  border: 1px solid #b4b2ae;
  border-radius: 4px;
  background: linear-gradient(#fdfdfd, #ececea);
}
.play { width: 30px; height: 30px; }
.volume { margin-left: auto; display: flex; align-items: flex-end; gap: 3px; }
.wedge { position: relative; }
.wedge input { position: absolute; inset: 0; width: 100%; height: 100%; margin: 0; opacity: 0; }
.vol-text { font: 9px "Open Sans", sans-serif; fill: #9b9b99; }
```
